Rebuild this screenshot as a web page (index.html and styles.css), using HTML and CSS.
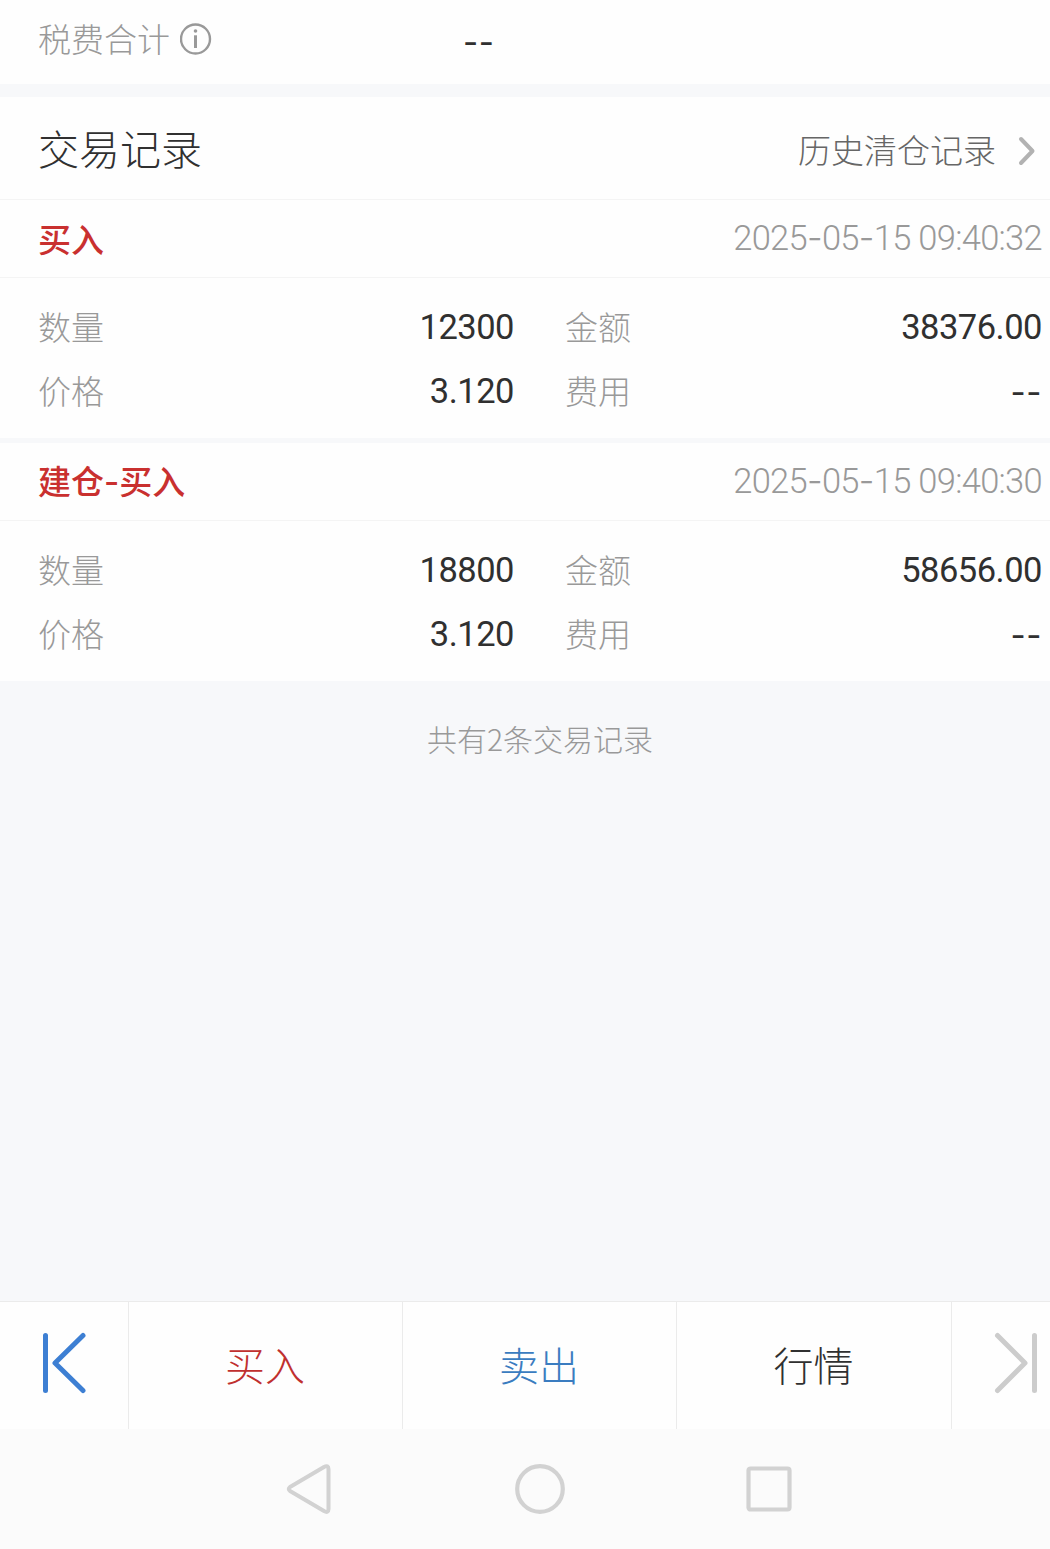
FILE: index.html
```html
<!DOCTYPE html>
<html lang="zh-CN">
<head>
  <meta charset="UTF-8" />
  <meta name="viewport" content="width=device-width, initial-scale=1.0"/>
  <title>交易记录</title>
  <link rel="stylesheet" href="styles.css">
</head>
<body>
  <div class="resumen">
    <span class="etiqueta">税费合计</span>
    <svg class="info" viewBox="0 0 32 32">
      <circle cx="15.5" cy="16" r="14.5" fill="none" stroke="#999" stroke-width="2.4"/>
      <circle cx="15.5" cy="8" r="1.8" fill="#999"/>
      <path d="M15.5 12.3V25" stroke="#999" stroke-width="3"/>
    </svg>
    <span class="guion">--</span>
  </div>

  <div class="encabezado">
    <h1>交易记录</h1>
    <a class="historial">历史清仓记录</a>
    <svg class="flecha" viewBox="0 0 18 30">
      <path d="M3 3L14.5 15L3 27" fill="none" stroke="#b2b2b2" stroke-width="4" stroke-linecap="round" stroke-linejoin="round"/>
    </svg>
  </div>

  <div class="registro">
    <div class="operacion">
      <span class="tipo">买入</span>
      <span class="fecha">2025<span class="raya">-</span>05<span class="raya">-</span>15 09:40:32</span>
    </div>
    <div class="detalle">
      <span class="etiqueta">数量</span><span class="valor">12300</span>
      <span class="etiqueta">金额</span><span class="valor">38376.00</span>
      <span class="etiqueta">价格</span><span class="valor">3.120</span>
      <span class="etiqueta">费用</span><span class="guion">--</span>
    </div>
  </div>

  <div class="registro">
    <div class="operacion">
      <span class="tipo">建仓<span class="raya">-</span>买入</span>
      <span class="fecha">2025<span class="raya">-</span>05<span class="raya">-</span>15 09:40:30</span>
    </div>
    <div class="detalle">
      <span class="etiqueta">数量</span><span class="valor">18800</span>
      <span class="etiqueta">金额</span><span class="valor">58656.00</span>
      <span class="etiqueta">价格</span><span class="valor">3.120</span>
      <span class="etiqueta">费用</span><span class="guion">--</span>
    </div>
  </div>

  <div class="total">共有2条交易记录</div>

  <div class="acciones">
    <div class="anterior">
      <svg viewBox="0 0 44 62">
        <path d="M3.5 3.5V58.5M41 3.5L13 31L41 58.5" fill="none" stroke="#3d7fd3" stroke-width="5" stroke-linecap="round" stroke-linejoin="round"/>
      </svg>
    </div>
    <div class="accion comprar">买入</div>
    <div class="accion vender">卖出</div>
    <div class="accion">行情</div>
    <div class="siguiente">
      <svg viewBox="0 0 44 62">
        <path d="M40.5 3.5V58.5M3.5 3.5L31 31L3.5 58.5" fill="none" stroke="#ccc" stroke-width="5" stroke-linecap="round" stroke-linejoin="round"/>
      </svg>
    </div>
  </div>

  <div class="sistema">
    <svg viewBox="0 0 50 52">
      <path d="M43.5 6.2Q43.5 1.5 39 4L5 24Q2.5 26 5 28L39 48Q43.5 50.5 43.5 46Z" fill="none" stroke="#d2d2d2" stroke-width="4" stroke-linejoin="round"/>
    </svg>
    <svg viewBox="0 0 50 52">
      <circle cx="25" cy="26" r="22.8" fill="none" stroke="#d2d2d2" stroke-width="4.2"/>
    </svg>
    <svg viewBox="0 0 50 52">
      <rect x="3.5" y="5.5" width="41" height="41" rx="2" fill="none" stroke="#d2d2d2" stroke-width="4.2"/>
    </svg>
  </div>
</body>
</html>
```
FILE: styles.css
```css
* {
  box-sizing: border-box;
}

body {
  margin: 0;
  height: 1549px;
  display: flex;
  flex-direction: column;
  font-family: "Noto Sans CJK SC", sans-serif;
  font-size: 33px;
  font-weight: 300;
  line-height: 1;
  color: #303030;
  background-color: #f7f8fa;
}

svg {
  display: block;
}

.resumen {
  height: 84px;
  padding: 0 0 6px 38px;
  display: flex;
  align-items: center;
  background-color: #fefefe;
}

.etiqueta {
  padding-bottom: 2px;
  color: #999;
}

.info {
  width: 32px;
  height: 32px;
  margin-left: 10px;
}

.resumen .guion {
  padding-top: 6px;
  margin-left: 251px;
}

.guion {
  padding-top: 3px;
  font-family: Inter, sans-serif;
  font-weight: 400;
  letter-spacing: 0.6px;
}

.encabezado {
  height: 103px;
  margin-top: 13px;
  padding: 0 14px 0 38px;
  display: flex;
  align-items: center;
  background-color: #fefefe;
  border-bottom: 1px solid #f4f4f4;
}

h1 {
  flex: 1;
  margin: 0;
  padding-bottom: 2px;
  font-size: 41px;
  font-weight: 300;
}

.historial {
  padding-top: 2px;
  color: #666;
}

.flecha {
  width: 18px;
  height: 30px;
  margin: 6px 0 0 22px;
}

.registro {
  background-color: #fefefe;
}

.registro + .registro {
  margin-top: 5px;
}

.operacion {
  height: 78px;
  padding: 0 8px 0 38px;
  display: flex;
  align-items: center;
  justify-content: space-between;
  border-bottom: 1px solid #f4f4f4;
}

.tipo {
  font-weight: 500;
  color: #c9302f;
}

.raya {
  font-family: Inter, sans-serif;
}

.fecha {
  font-family: Roboto, sans-serif;
  font-size: 34.5px;
  letter-spacing: -0.7px;
  color: #999;
}

.detalle {
  height: 160px;
  padding: 17px 8px 15px 38px;
  display: grid;
  grid-template-columns: 100px 376px 152px 376px;
  grid-template-rows: 64px 64px;
  align-items: center;
}

.detalle .etiqueta:nth-child(4n + 3) {
  padding-left: 51px;
}

.valor {
  font-family: Roboto, sans-serif;
  font-size: 34.5px;
  font-weight: 400;
  letter-spacing: -0.5px;
}

.valor,
.detalle .guion {
  text-align: right;
}

.total {
  flex: 1;
  padding: 42px 0 0 30px;
  font-size: 30px;
  text-align: center;
  color: #999;
}

.acciones {
  height: 128px;
  display: grid;
  grid-template-columns: 128px 274px 274px 275px 99px;
  font-size: 40px;
  background-color: #fefefe;
  border-top: 1px solid #ebebeb;
  overflow: hidden;
}

.anterior,
.siguiente {
  display: flex;
  align-items: center;
  padding: 0 0 6px 41.5px;
}

.acciones svg {
  width: 44px;
  height: 62px;
}

.accion,
.siguiente {
  border-left: 1px solid #ebebeb;
}

.accion {
  display: flex;
  align-items: center;
  justify-content: center;
  padding: 0 1px 3px 0;
}

.comprar {
  color: #c0302f;
}

.vender {
  color: #3a7cc0;
}

.sistema {
  height: 120px;
  padding-left: 285px;
  display: flex;
  align-items: center;
  gap: 180px;
  background-color: #fbfbfb;
}

.sistema svg {
  width: 50px;
  height: 52px;
}
```
